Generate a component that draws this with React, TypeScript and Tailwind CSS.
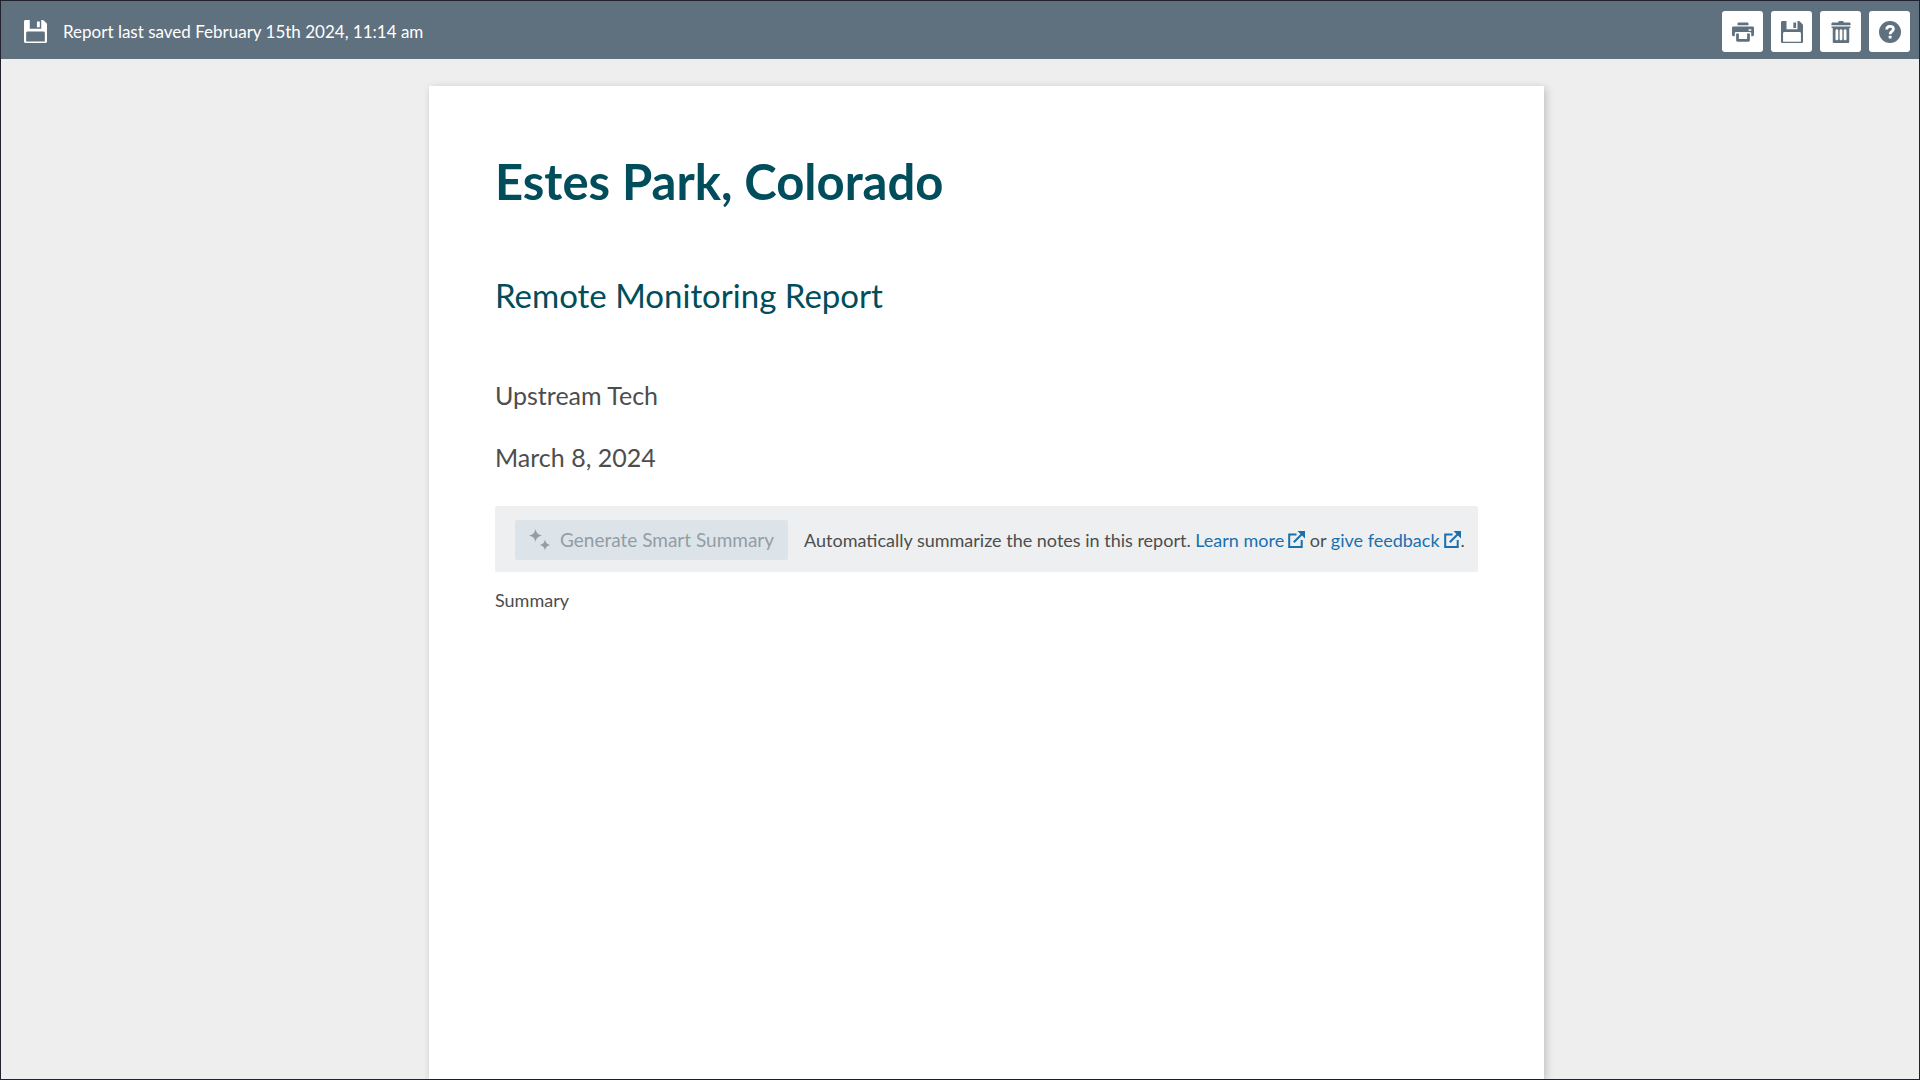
import { ReactNode } from 'react';

type IconProps = {
  className?: string;
};

function FloppyDiskIcon({ className }: IconProps) {
  return (
    <svg viewBox="0 0 16 16" className={className} fill="currentColor" fillRule="evenodd" aria-hidden="true">
      <path d="M15.71 2.29l-2-2A.997.997 0 0013 0h-1v6H4V0H1C.45 0 0 .45 0 1v14c0 .55.45 1 1 1h14c.55 0 1-.45 1-1V3c0-.28-.11-.53-.29-.71zM14.500 15H1.500V9c0-.55.45-1 1-1h11c.55 0 1 .45 1 1v6zM11 1H9v4h2V1z" />
    </svg>
  );
}

function PrintIcon({ className }: IconProps) {
  return (
    <svg viewBox="0 0 16 16" className={className} fill="currentColor" fillRule="evenodd" aria-hidden="true">
      <path d="M12 2c0-.55-.45-1-1-1H5c-.55 0-1 .45-1 1v1h8V2z" />
      <path d="M15 4H1c-.55 0-1 .45-1 1v5c0 .55.45 1 1 1h1V9c0-.55.45-1 1-1h10c.55 0 1 .45 1 1v2h1c.55 0 1-.45 1-1V5c0-.55-.45-1-1-1zm-1 3h-2V6h2v1z" />
      <path d="M11 9v4H5V9H3v5c0 .55.45 1 1 1h8c.55 0 1-.45 1-1V9h-2z" />
    </svg>
  );
}

function TrashIcon({ className }: IconProps) {
  return (
    <svg viewBox="0 0 16 16" className={className} fill="currentColor" fillRule="evenodd" aria-hidden="true">
      <path d="M14 1h-4c0-.55-.45-1-1-1H7c-.55 0-1 .45-1 1H2c-.55 0-1 .45-1 1v1h14V2c0-.55-.45-1-1-1z" />
      <path d="M14.5 4h-13c-.28 0-.5.22-.5.5s.22.5.5.5H2v10c0 .55.45 1 1 1h10c.55 0 1-.45 1-1V5h.5c.28 0 .5-.22.5-.5s-.22-.5-.5-.5zM6 13c0 .55-.45 1-1 1s-1-.45-1-1V7c0-.55.45-1 1-1s1 .45 1 1v6zm3 0c0 .55-.45 1-1 1s-1-.45-1-1V7c0-.55.45-1 1-1s1 .45 1 1v6zm3 0c0 .55-.45 1-1 1s-1-.45-1-1V7c0-.55.45-1 1-1s1 .45 1 1v6z" />
    </svg>
  );
}

function HelpIcon({ className }: IconProps) {
  return (
    <svg viewBox="0 0 16 16" className={className} aria-hidden="true">
      <circle cx="8" cy="8" r="8" fill="currentColor" />
      <path d="M5.6 6.200C5.6 4.5 6.6 3.9 8 3.9s2.5.7 2.5 2c0 1.700-2.400 1.700-2.400 3.700" fill="none" stroke="#fff" strokeWidth="2" />
      <rect x="7.100" y="10.800" width="2" height="2" rx=".3" fill="#fff" />
    </svg>
  );
}

function SparklesIcon({ className }: IconProps) {
  return (
    <svg viewBox="0 0 22 22" className={className} fill="currentColor" aria-hidden="true">
      <path d="M6.500 0c.9 4 2.200 5.500 6.500 6.500-4.300 1-5.600 2.500-6.500 6.500C5.600 9 4.300 7.500 0 6.500 4.300 5.500 5.600 4 6.500 0z" />
      <path d="M16 10.500c.8 3.300 1.900 4.600 5.500 5.500-3.600.9-4.700 2.200-5.500 5.500-.8-3.300-1.900-4.600-5.500-5.500 3.600-.9 4.700-2.200 5.500-5.500z" />
    </svg>
  );
}

function ShareIcon({ className }: IconProps) {
  return (
    <svg viewBox="0 0 17 17" className={className} fill="none" stroke="currentColor" strokeWidth="2" aria-hidden="true">
      <path d="M8.500 3.500H1.200V16h12.500V9" />
      <path d="M5.800 11.200L14.500 2.500" />
      <path d="M9.500 0H17v7.500z" fill="currentColor" stroke="none" />
    </svg>
  );
}

type ToolbarButtonProps = {
  label: string;
  children: ReactNode;
};

function ToolbarButton({ label, children }: ToolbarButtonProps) {
  return (
    <button
      type="button"
      aria-label={label}
      className="flex items-center justify-center size-[41px] rounded-[3px] bg-white text-[#5f717f] hover:bg-gray-100"
    >
      {children}
    </button>
  );
}

type ExternalLinkProps = {
  children: ReactNode;
};

function ExternalLink({ children }: ExternalLinkProps) {
  return (
    <a href="#" className="text-[#1a6fae] hover:underline">
      {children}
      <ShareIcon className="inline-block ml-1 size-[17px] align-[-1px]" />
    </a>
  );
}

function Toolbar() {
  return (
    <header className="flex items-center justify-between bg-[#5f717f] pl-[23px] pr-[9px] pt-[10px] pb-[7px]">
      <div className="flex items-center gap-4 text-white">
        <FloppyDiskIcon className="size-[23px]" />
        <span className="text-[17px] leading-[26px]">Report last saved February 15th 2024, 11:14 am</span>
      </div>
      <div className="flex gap-2">
        <ToolbarButton label="Print">
          <PrintIcon className="size-[22px]" />
        </ToolbarButton>
        <ToolbarButton label="Save">
          <FloppyDiskIcon className="size-[22px]" />
        </ToolbarButton>
        <ToolbarButton label="Delete">
          <TrashIcon className="size-[22px]" />
        </ToolbarButton>
        <ToolbarButton label="Help">
          <HelpIcon className="size-[22px]" />
        </ToolbarButton>
      </div>
    </header>
  );
}

function SmartSummaryBar() {
  return (
    <div className="flex items-center gap-4 rounded-[2px] bg-[#edeff1] pl-5 pr-3 pt-[14px] pb-3">
      <button
        type="button"
        disabled
        className="flex items-center gap-[9px] h-10 shrink-0 rounded-[2px] bg-[#dde4e9] px-[14px] text-[19px] text-[#929da5]"
      >
        <SparklesIcon className="size-[22px]" />
        Generate Smart Summary
      </button>
      <p className="text-[18px] leading-6">
        Automatically summarize the notes in this report. <ExternalLink>Learn more</ExternalLink> or{' '}
        <ExternalLink>give feedback</ExternalLink>.
      </p>
    </div>
  );
}

function App() {
  return (
    <div className="flex flex-col min-h-screen border border-[#22222e] bg-[#eeeeee] font-['Lato',sans-serif] text-[#4d4d4d]">
      <Toolbar />
      <main className="flex flex-col grow pt-[27px] pl-[53px]">
        <article className="grow w-full max-w-[1115px] mx-auto bg-white px-[66px] pt-[65px] shadow-[2px_2px_8px_rgba(0,0,0,0.2)]">
          <h1 className="text-[49px] leading-[60px] font-bold text-[#004d5b]">Estes Park, Colorado</h1>
          <h2 className="mt-16 text-[33px] leading-[40px] text-[#004d5b]">Remote Monitoring Report</h2>
          <p className="mt-16 text-[25px] leading-[32px]">Upstream Tech</p>
          <p className="mt-[30px] mb-[33px] text-[25px] leading-[32px]">March 8, 2024</p>
          <SmartSummaryBar />
          <p className="mt-4 text-[18px] leading-6">Summary</p>
        </article>
      </main>
    </div>
  );
}

export default App;
